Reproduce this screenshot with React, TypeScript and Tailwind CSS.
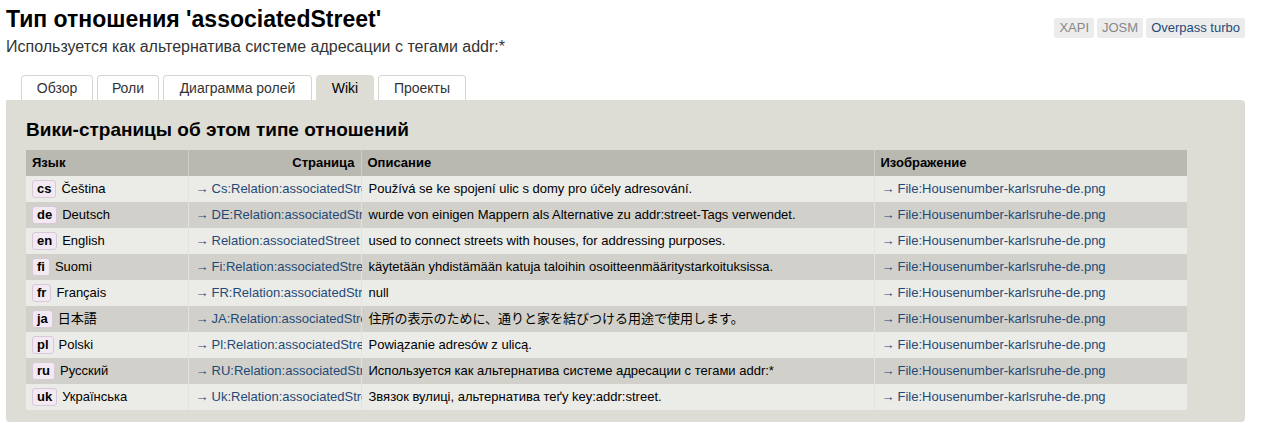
import React from "react";

type Row = { code: string; name: string; page: string; desc: string };

const rows: Row[] = [
  { code: "cs", name: "Čeština", page: "Cs:Relation:associatedStreet", desc: "Používá se ke spojení ulic s domy pro účely adresování." },
  { code: "de", name: "Deutsch", page: "DE:Relation:associatedStreet", desc: "wurde von einigen Mappern als Alternative zu addr:street-Tags verwendet." },
  { code: "en", name: "English", page: "Relation:associatedStreet", desc: "used to connect streets with houses, for addressing purposes." },
  { code: "fi", name: "Suomi", page: "Fi:Relation:associatedStreet", desc: "käytetään yhdistämään katuja taloihin osoitteenmääritystarkoituksissa." },
  { code: "fr", name: "Français", page: "FR:Relation:associatedStreet", desc: "null" },
  { code: "ja", name: "日本語", page: "JA:Relation:associatedStreet", desc: "住所の表示のために、通りと家を結びつける用途で使用します。" },
  { code: "pl", name: "Polski", page: "Pl:Relation:associatedStreet", desc: "Powiązanie adresów z ulicą." },
  { code: "ru", name: "Русский", page: "RU:Relation:associatedStreet", desc: "Используется как альтернатива системе адресации с тегами addr:*" },
  { code: "uk", name: "Українська", page: "Uk:Relation:associatedStreet", desc: "Звязок вулиці, альтернатива теґу key:addr:street." },
];

const tabs = [
  { label: "Обзор", w: "w-[72px]" },
  { label: "Роли", w: "w-[62px]" },
  { label: "Диаграмма ролей", w: "w-[149px]" },
  { label: "Wiki", w: "w-[58px]" },
  { label: "Проекты", w: "w-[88px]" },
];

const App: React.FC = () => {
  return (
    <div className="w-[1264px] h-[423px] overflow-hidden bg-white text-black font-['Liberation_Sans','Noto_Sans_CJK_JP',sans-serif]">
      {/* Header */}
      <div className="flex justify-between px-[6px] pt-[4px]">
        <div>
          <h1 className="text-[23px] leading-[30px] font-bold">Тип отношения 'associatedStreet'</h1>
          <p className="mt-[2px] text-[16px] leading-[21px] text-[#333]">Используется как альтернатива системе адресации с тегами addr:*</p>
        </div>
        <div className="flex gap-[3px] mt-[14px] mr-[13px] text-[13px] leading-[20px] h-[20px]">
          <span className="px-[5px] bg-[#ececec] rounded-[2px] text-[#888]">XAPI</span>
          <span className="px-[5px] bg-[#ececec] rounded-[2px] text-[#888]">JOSM</span>
          <span className="px-[5px] bg-[#ececec] rounded-[2px] text-[#1f4a78]">Overpass turbo</span>
        </div>
      </div>

      {/* Tabs */}
      <div className="flex gap-[4px] pl-[21px] mt-[18px]">
        {tabs.map((t) => (
          <div
            key={t.label}
            className={`${t.w} h-[25px] text-center text-[14px] leading-[24px] rounded-t-[4px] border border-b-0 ${
              t.label === "Wiki" ? "bg-[#dddcd5] border-[#dddcd5]" : "bg-white border-[#d6d6d0] text-[#333]"
            }`}
          >
            {t.label}
          </div>
        ))}
      </div>

      {/* Panel */}
      <div className="mx-[6px] mr-[19px] bg-[#dddcd5] rounded-[4px] rounded-tl-none px-[20px] pt-[19px] pb-[12px]">
        <h2 className="text-[19px] leading-[22px] font-bold mb-[9px]">Вики-страницы об этом типе отношений</h2>
        <table className="table-fixed border-collapse text-[13px] w-[1161px]">
          <colgroup>
            <col className="w-[162px]" />
            <col className="w-[173px]" />
            <col className="w-[513px]" />
            <col className="w-[313px]" />
          </colgroup>
          <thead>
            <tr className="bg-[#b9b8b1] h-[26px] font-bold">
              <th className="text-left px-[6px] border-r border-[#cfcec8]">Язык</th>
              <th className="text-right px-[6px] border-r border-[#cfcec8]">Страница</th>
              <th className="text-left px-[6px] border-r border-[#cfcec8]">Описание</th>
              <th className="text-left px-[6px]">Изображение</th>
            </tr>
          </thead>
          <tbody>
            {rows.map((r, i) => (
              <tr key={r.code} className={`h-[26px] ${i % 2 === 0 ? "bg-[#ebebe7]" : "bg-[#d1d0ca]"}`}>
                <td className="px-[6px] whitespace-nowrap border-r border-[#e2e2de]">
                  <span className="inline-block px-[4px] leading-[16px] font-bold bg-[#f3e9f3] border border-[#d8c9d8] rounded-[3px] mr-[5px]">
                    {r.code}
                  </span>
                  {r.name}
                </td>
                <td className="pl-[7px] border-r border-[#e2e2de]">
                  <div className="w-[166px] whitespace-nowrap overflow-hidden text-[#1f4a78]">
                    <span className="mr-[3px]">→</span>
                    {r.page}
                  </div>
                </td>
                <td className="pl-[7px] whitespace-nowrap overflow-hidden border-r border-[#e2e2de]">{r.desc}</td>
                <td className="pl-[7px] whitespace-nowrap text-[#1f4a78]">
                  <span className="mr-[3px]">→</span>File:Housenumber-karlsruhe-de.png
                </td>
              </tr>
            ))}
          </tbody>
        </table>
      </div>
    </div>
  );
};

export default App;
